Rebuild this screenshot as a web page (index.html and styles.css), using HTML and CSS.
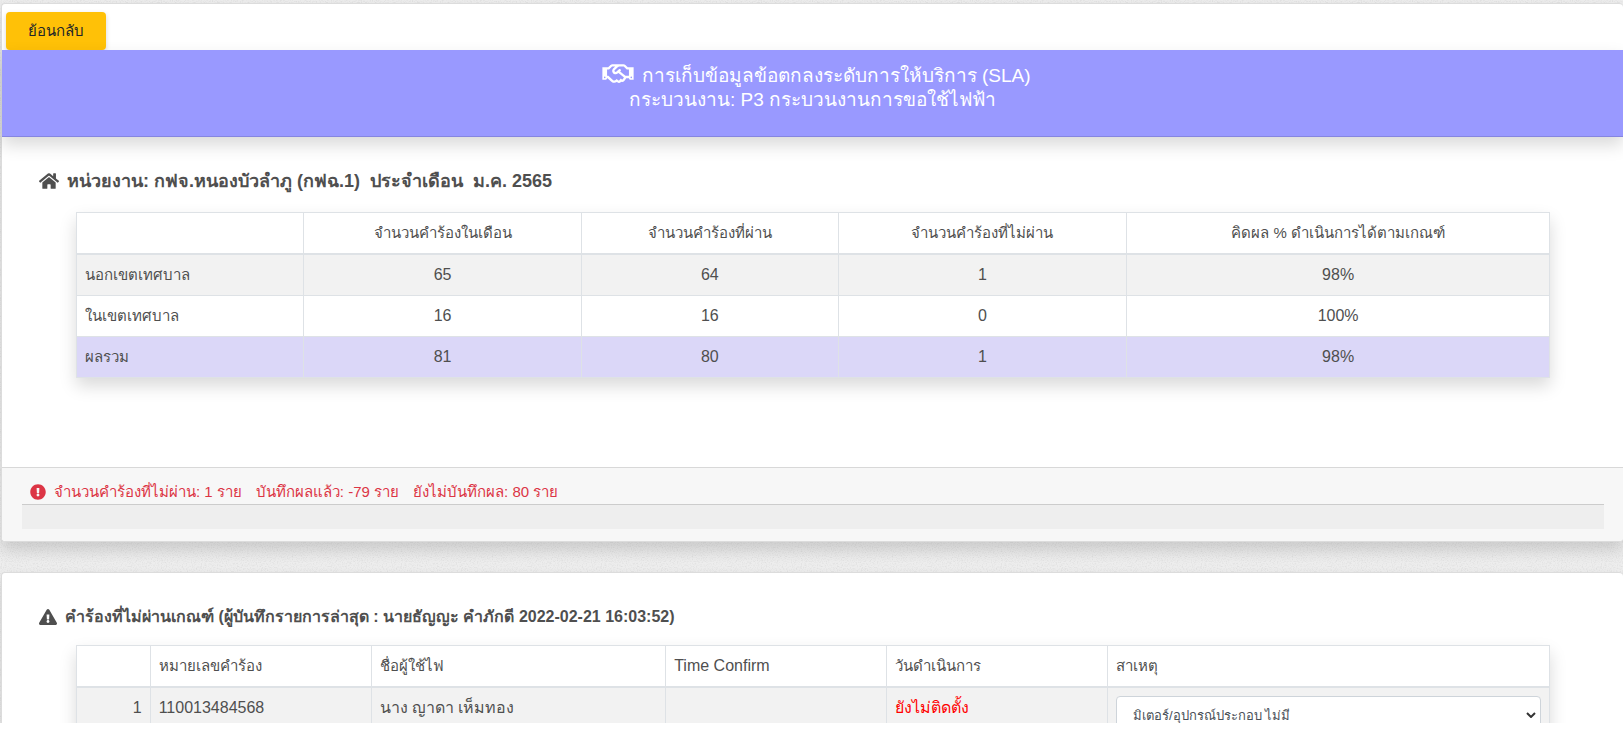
FILE: index.html
```html
<!DOCTYPE html>
<html lang="th">
<head>
    <meta charset="UTF-8">
    <meta name="viewport" content="width=device-width, initial-scale=1.0">
    <title>SLA</title>
    <link rel="stylesheet" href="styles.css">
</head>
<body>
<main class="page">
    <section class="card">
        <div class="toolbar">
            <button type="button" class="btn-back">ย้อนกลับ</button>
        </div>
        <header class="card-header">
            <h1>
                <svg class="icon icon-handshake" viewBox="0 0 640 512" aria-hidden="true"><path d="M519.2 127.9l-47.6-47.6A56.252 56.252 0 0 0 432 64H205.2c-14.8 0-29.1 5.9-39.6 16.3L118 127.9H0v255.7h64c17.6 0 31.8-14.2 31.9-31.7h9.1l84.6 76.4c30.9 25.1 73.8 25.7 105.6 3.8 12.5 10.8 26 15.9 41.1 15.9 18.2 0 35.3-7.4 48.8-24 22.1 8.7 48.2 2.6 64-16.8l26.2-32.3c5.6-6.9 9.1-14.8 10.9-23h57.9c.1 17.5 14.4 31.7 31.9 31.7h64V127.9H519.2zM48 351.6c-8.8 0-16-7.2-16-16s7.2-16 16-16 16 7.2 16 16c0 8.9-7.2 16-16 16zm390-6.9l-26.1 32.2c-2.8 3.4-7.8 4-11.3 1.2l-23.9-19.4-30 36.5c-6 7.3-15 4.8-18 2.4l-36.8-31.5-15.6 19.2c-13.9 17.1-39.2 19.7-55.3 6.6l-97.3-88H96V175.8h41.9l61.7-61.6c2-.8 3.7-1.5 5.7-2.3H262l-38.7 35.5c-29.4 26.9-31.1 72.3-4.4 101.3 14.8 16.2 61.2 41.2 101.5 4.4l8.2-7.5 108.2 87.8c3.4 2.8 3.9 7.9 1.2 11.3zm106-40.8h-69.2c-2.3-2.8-4.9-5.4-7.7-7.7l-102.7-83.4 12.5-11.4c6.5-6 7-16.1 1-22.6L367 167.1c-6-6.5-16.1-6.9-22.6-1l-55.2 50.6c-9.5 8.7-25.7 9.4-34.6 0-9.3-9.9-8.5-25.1 1.2-33.9l65.6-60.1c7.4-6.8 17-10.5 27-10.5l83.7-.2c2.1 0 4.1.8 5.5 2.3l61.7 61.6H544v128zm48 47.7c-8.8 0-16-7.2-16-16s7.2-16 16-16 16 7.2 16 16c0 8.9-7.2 16-16 16z"/></svg>
                การเก็บข้อมูลข้อตกลงระดับการให้บริการ (SLA)<br>
                กระบวนงาน: P3 กระบวนงานการขอใช้ไฟฟ้า
            </h1>
        </header>
        <div class="card-body summary">
            <h2>
                <svg class="icon icon-wide" viewBox="0 0 576 512" aria-hidden="true"><path d="M280.37 148.26L96 300.11V464a16 16 0 0 0 16 16l112.06-.29a16 16 0 0 0 15.92-16V368a16 16 0 0 1 16-16h64a16 16 0 0 1 16 16v95.64a16 16 0 0 0 16 16.05L464 480a16 16 0 0 0 16-16V300L295.67 148.26a12.19 12.19 0 0 0-15.3 0zM571.6 251.47L488 182.56V44.05a12 12 0 0 0-12-12h-56a12 12 0 0 0-12 12v72.61L318.47 43a48 48 0 0 0-61 0L4.34 251.47a12 12 0 0 0-1.6 16.9l25.5 31A12 12 0 0 0 45.15 301l235.22-193.74a12.19 12.19 0 0 1 15.3 0L530.9 301a12 12 0 0 0 16.9-1.6l25.5-31a12 12 0 0 0-1.7-16.93z"/></svg>
                <span>หน่วยงาน: กฟจ.หนองบัวลำภู (กฟฉ.1) &nbsp;ประจำเดือน &nbsp;ม.ค. 2565</span>
            </h2>
            <table class="table table-summary">
                <colgroup>
                    <col class="col-area">
                    <col class="col-total">
                    <col class="col-pass">
                    <col class="col-fail">
                    <col class="col-percent">
                </colgroup>
                <thead>
                <tr>
                    <th></th>
                    <th>จำนวนคำร้องในเดือน</th>
                    <th>จำนวนคำร้องที่ผ่าน</th>
                    <th>จำนวนคำร้องที่ไม่ผ่าน</th>
                    <th>คิดผล % ดำเนินการได้ตามเกณฑ์</th>
                </tr>
                </thead>
                <tbody>
                <tr>
                    <td class="thai">นอกเขตเทศบาล</td>
                    <td>65</td>
                    <td>64</td>
                    <td>1</td>
                    <td>98%</td>
                </tr>
                <tr>
                    <td class="thai">ในเขตเทศบาล</td>
                    <td>16</td>
                    <td>16</td>
                    <td>0</td>
                    <td>100%</td>
                </tr>
                <tr class="total">
                    <td class="thai">ผลรวม</td>
                    <td>81</td>
                    <td>80</td>
                    <td>1</td>
                    <td>98%</td>
                </tr>
                </tbody>
            </table>
        </div>
        <footer class="card-footer">
            <p class="status">
                <svg class="icon" viewBox="0 0 512 512" aria-hidden="true"><path d="M504 256c0 136.997-111.043 248-248 248S8 392.997 8 256C8 119.083 119.043 8 256 8s248 111.083 248 248zm-248 50c-25.405 0-46 20.595-46 46s20.595 46 46 46 46-20.595 46-46-20.595-46-46-46zm-43.673-165.346l7.418 136c.347 6.364 5.609 11.346 11.982 11.346h48.546c6.373 0 11.635-4.982 11.982-11.346l7.418-136c.375-6.874-5.098-12.654-11.982-12.654h-63.383c-6.884 0-12.356 5.78-11.981 12.654z"/></svg>
                <span>จำนวนคำร้องที่ไม่ผ่าน: 1 ราย</span>
                <span>บันทึกผลแล้ว: -79 ราย</span>
                <span>ยังไม่บันทึกผล: 80 ราย</span>
            </p>
            <div class="progress"></div>
        </footer>
    </section>

    <section class="card">
        <div class="card-body requests">
            <h3>
                <svg class="icon icon-warning" viewBox="0 0 576 512" aria-hidden="true"><path d="M569.517 440.013C587.975 472.007 564.806 512 527.94 512H48.054c-36.937 0-59.999-40.055-41.577-71.987L246.423 23.985c18.467-32.009 64.72-31.951 83.154 0l239.94 416.028zM288 354c-25.405 0-46 20.595-46 46s20.595 46 46 46 46-20.595 46-46-20.595-46-46-46zm-43.673-165.346l7.418 136c.347 6.364 5.609 11.346 11.982 11.346h48.546c6.373 0 11.635-4.982 11.982-11.346l7.418-136c.375-6.874-5.098-12.654-11.982-12.654h-63.383c-6.884 0-12.356 5.78-11.981 12.654z"/></svg>
                <span>คำร้องที่ไม่ผ่านเกณฑ์ (ผู้บันทึกรายการล่าสุด : นายธัญญะ คำภักดี 2022-02-21 16:03:52)</span>
            </h3>
            <table class="table table-requests">
                <colgroup>
                    <col class="col-no">
                    <col class="col-request">
                    <col class="col-name">
                    <col class="col-confirm">
                    <col class="col-date">
                    <col class="col-reason">
                </colgroup>
                <thead>
                <tr>
                    <th></th>
                    <th>หมายเลขคำร้อง</th>
                    <th>ชื่อผู้ใช้ไฟ</th>
                    <th class="latin">Time Confirm</th>
                    <th>วันดำเนินการ</th>
                    <th id="reason">สาเหตุ</th>
                </tr>
                </thead>
                <tbody>
                <tr>
                    <td class="number">1</td>
                    <td>110013484568</td>
                    <td>นาง ญาดา เห็มทอง</td>
                    <td></td>
                    <td class="pending">ยังไม่ติดตั้ง</td>
                    <td>
                        <div class="select-wrap">
                            <select aria-labelledby="reason">
                                <option>มิเตอร์/อุปกรณ์ประกอบ ไม่มี</option>
                            </select>
                            <svg class="chevron" viewBox="0 0 10 6" aria-hidden="true"><path d="M1 1l4 4 4-4"/></svg>
                        </div>
                    </td>
                </tr>
                </tbody>
            </table>
        </div>
    </section>
</main>
</body>
</html>
```
FILE: styles.css
```css
* {
    box-sizing: border-box;
}
body {
    margin: 0;
    background-color: #fff;
    color: #4f4f4f;
    font-family: "Liberation Sans", Arial, sans-serif;
    font-size: 16px;
    line-height: 24px;
}

.page {
    height: calc(100vh - 9px);
    padding: 3px 0 0 1px;
    overflow: hidden;
    background-color: #eee;
    background-image: url("data:image/svg+xml,%3Csvg xmlns='http://www.w3.org/2000/svg' width='200' height='200'%3E%3Cfilter id='n'%3E%3CfeTurbulence type='fractalNoise' baseFrequency='0.8' numOctaves='2' stitchTiles='stitch'/%3E%3CfeColorMatrix values='0 0 0 0 0.4 0 0 0 0 0.4 0 0 0 0 0.4 1 0 0 0 -0.45'/%3E%3C/filter%3E%3Crect width='200' height='200' filter='url(%23n)' opacity='0.5'/%3E%3C/svg%3E");
}

.card {
    margin-bottom: 30px;
    background-color: #fff;
    border: 1px solid #dcdcdc;
    border-right: none;
    border-radius: 4px;
    box-shadow: 0 8px 16px rgba(0, 0, 0, 0.15);
}
.toolbar {
    display: flex;
    padding: 8px 4px 0;
}
.btn-back {
    width: 100px;
    height: 38px;
    padding: 0;
    background-color: #ffc107;
    color: #212529;
    border: none;
    border-radius: 4px;
    box-shadow: 0 2px 5px rgba(0, 0, 0, 0.16);
    font: inherit;
    font-size: 15px;
    cursor: pointer;
}
.card-header {
    position: relative;
    padding: 14px 20px 24px;
    background-color: #9999ff;
    border-bottom: 1px solid #8585e0;
    box-shadow: 0 8px 16px rgba(0, 0, 0, 0.15);
    color: #fff;
    text-align: center;
}

h1, h2, h3, p {
    margin: 0;
}
h1 {
    font-size: 19px;
    font-weight: normal;
    line-height: 24px;
}
h2, h3 {
    display: flex;
    align-items: center;
    gap: 8px;
}
h2 {
    font-size: 18px;
    line-height: 24px;
}
h3 {
    font-size: 16px;
    line-height: 24px;
}

.icon {
    width: 16px;
    height: 16px;
    flex: none;
    fill: currentColor;
}
.icon-handshake {
    width: 32px;
    height: 25px;
    margin: -4px 2px -4px 8px;
}
.icon-wide {
    width: 20px;
    height: 18px;
}
.icon-warning {
    width: 18px;
    height: 16px;
}

.card-body {
    padding: 32px 37px 0;
}
.summary {
    padding-bottom: 89px;
}

.table {
    width: calc(100% - 73px);
    margin: 19px 36px 0 37px;
    border-collapse: collapse;
    table-layout: fixed;
    box-shadow: 0 8px 16px rgba(0, 0, 0, 0.15);
}
.table-requests {
    margin-top: 16px;
}
th, td {
    height: 41px;
    padding: 8px;
    border: 1px solid #dee2e6;
    font-weight: normal;
    text-align: left;
    line-height: 24px;
}
th,
.thai {
    font-size: 15px;
}
.latin {
    font-size: 16px;
}
thead th {
    border-bottom-width: 2px;
    background-color: #fff;
}
tbody tr {
    background-color: #fff;
}
tbody tr:nth-child(odd) {
    background-color: #f2f2f2;
}
tbody .total {
    background-color: #dbd7f8 !important;
}
.table-summary th,
.table-summary td + td {
    text-align: center;
}
.col-area { width: 15.4%; }
.col-total { width: 18.9%; }
.col-pass { width: 17.4%; }
.col-fail { width: 19.6%; }
.col-percent { width: 28.7%; }

.card-footer {
    padding: 12px 19px 12px 20px;
    background-color: #f7f7f7;
    border-top: 1px solid #d8d8d8;
    border-radius: 0 0 4px 4px;
}
.status {
    display: flex;
    align-items: center;
    gap: 14px;
    padding: 0 8px;
    color: #dc3545;
    font-size: 15px;
}
.status .icon {
    margin-right: -6px;
}
.progress {
    height: 25px;
    background-color: #eee;
    border-top: 1px solid #ccc;
}

.requests {
    padding-bottom: 40px;
}
.col-no { width: 5%; }
.col-request { width: 15%; }
.col-name { width: 20%; }
.col-confirm { width: 15%; }
.col-date { width: 15%; }
.col-reason { width: 30%; }
.table-requests td {
    vertical-align: top;
}
.table-requests .number {
    text-align: right;
}
.pending {
    color: #ff0000;
}

.select-wrap {
    position: relative;
}
select {
    display: block;
    width: 100%;
    height: 38px;
    padding: 0 16px;
    appearance: none;
    background-color: #fff;
    color: #495057;
    border: 1px solid #ced4da;
    border-radius: 4px;
    font-family: inherit;
    font-size: 13px;
}
.chevron {
    position: absolute;
    top: 16px;
    right: 5px;
    width: 10px;
    height: 6px;
    fill: none;
    stroke: #333;
    stroke-width: 2;
    pointer-events: none;
}
```
